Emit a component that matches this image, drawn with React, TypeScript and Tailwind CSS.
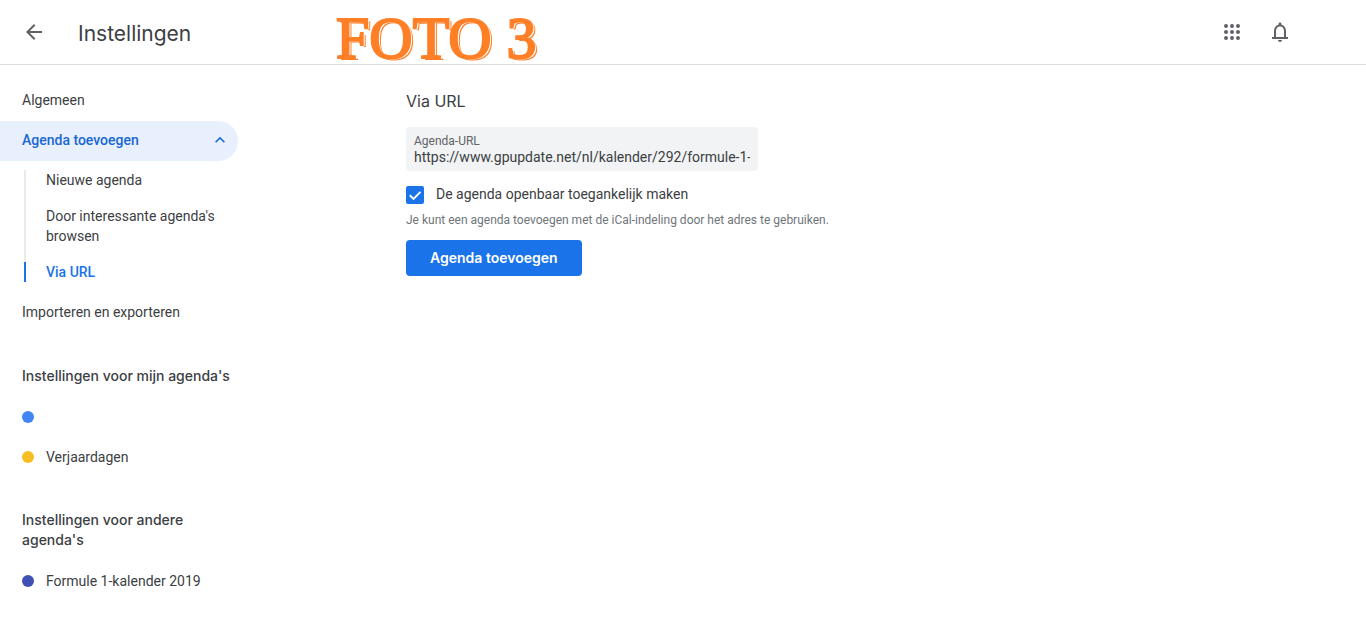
import { useState } from "react";
import { MdArrowBack, MdKeyboardArrowUp } from "react-icons/md";

const subItems = [
  { label: "Nieuwe agenda", active: false },
  { label: "Door interessante agenda's browsen", active: false },
  { label: "Via URL", active: true },
];

const AppsIcon = () => (
  <svg viewBox="0 0 24 24" fill="currentColor" className="size-6">
    {[6, 12, 18].map((y) =>
      [6, 12, 18].map((x) => <circle key={`${x}-${y}`} cx={x} cy={y} r="2" />)
    )}
  </svg>
);

const BellIcon = () => (
  <svg viewBox="0 0 24 24" fill="currentColor" className="size-6">
    <path d="M18 17v-6c0-3.07-1.63-5.64-4.5-6.32V4c0-.83-.67-1.5-1.5-1.5s-1.5.67-1.5 1.5v.68C7.64 5.36 6 7.92 6 11v6H4v2h16v-2h-2zm-2 0H8v-6c0-2.48 1.51-4.5 4-4.5s4 2.02 4 4.5v6zm-4 5c1.1 0 2-.9 2-2h-4c0 1.1.9 2 2 2z" />
  </svg>
);

const Header = () => {
  return (
    <header className="flex h-[65px] items-center border-b border-[#dadce0] pl-[22px] pr-[74px] text-[#5f6368]">
      <button aria-label="Terug" className="cursor-pointer">
        <MdArrowBack className="size-6" />
      </button>
      <h1 className="ml-8 w-[258px] pt-1 font-['Inter',sans-serif] text-[21px] leading-7 text-[#3c4043]">
        Instellingen
      </h1>
      <p className="whitespace-nowrap pt-3 font-['Liberation_Serif',serif] text-[60px] leading-none text-[#ff7f27] [-webkit-text-stroke:2px_#ff7f27] [text-shadow:2px_1px_0_#fff,3px_2px_0_#ff7f27]">
        FOTO 3
      </p>
      <div className="ml-auto flex gap-6">
        <button aria-label="Apps" className="cursor-pointer">
          <AppsIcon />
        </button>
        <button aria-label="Meldingen" className="cursor-pointer">
          <BellIcon />
        </button>
      </div>
    </header>
  );
};

const CalendarLink = ({ color, label }: { color: string; label?: string }) => {
  return (
    <a href="#" aria-label={label ?? "Mijn agenda"} className="flex h-10 items-center gap-3">
      <span className={`size-3 rounded-full ${color}`} />
      {label}
    </a>
  );
};

const Sidebar = () => {
  return (
    <nav className="w-[238px] shrink-0 pt-4">
      <a href="#" className="flex h-10 items-center pb-0.5 pl-[22px]">
        Algemeen
      </a>
      <button className="flex h-10 w-full cursor-pointer items-center justify-between rounded-r-full bg-[#e8f0fe] pb-0.5 pl-[22px] pr-2 font-medium text-[#1967d2]">
        Agenda toevoegen
        <MdKeyboardArrowUp className="size-5" />
      </button>
      <ul className="ml-6 pb-[11px] pt-[9px]">
        {subItems.map(({ label, active }) => (
          <li
            key={label}
            className={
              active
                ? "border-l-2 border-[#1a73e8] pl-5 font-medium text-[#1a73e8]"
                : "border-l-2 border-[#e8eaed] pb-4 pl-5"
            }
          >
            <a href="#" className="block">
              {label}
            </a>
          </li>
        ))}
      </ul>
      <a href="#" className="flex h-10 items-center pb-0.5 pl-[22px]">
        Importeren en exporteren
      </a>

      <section className="pl-[22px] pt-[33px]">
        <h2 className="pb-[11px] font-['Inter',sans-serif] text-sm font-medium">
          Instellingen voor mijn agenda's
        </h2>
        <CalendarLink color="bg-[#4285f4]" />
        <CalendarLink color="bg-[#f6bf26]" label="Verjaardagen" />
      </section>
      <section className="pl-[22px] pt-[33px]">
        <h2 className="pb-[11px] font-['Inter',sans-serif] text-sm font-medium">
          Instellingen voor andere agenda's
        </h2>
        <CalendarLink color="bg-[#3f51b5]" label="Formule 1-kalender 2019" />
      </section>
    </nav>
  );
};

const AddByUrl = () => {
  const [url, setUrl] = useState("https://www.gpupdate.net/nl/kalender/292/formule-1-");
  const [isPublic, setIsPublic] = useState(true);

  return (
    <main className="flex-1 pl-[168px] pr-6 pt-6">
      <form onSubmit={(e) => e.preventDefault()}>
        <h2 className="font-['Inter',sans-serif] text-base leading-6">Via URL</h2>
        <div className="mt-[14px] h-11 max-w-[352px] rounded bg-[#f1f3f4] px-2 pt-1.5">
          <label htmlFor="url" className="block text-xs leading-4 text-[#5f6368]">
            Agenda-URL
          </label>
          <input
            id="url"
            type="text"
            value={url}
            onChange={(e) => setUrl(e.target.value)}
            className="block h-4 w-full bg-transparent text-sm leading-4 outline-none"
          />
        </div>
        <div className="mt-[14px] flex h-5 items-center gap-3">
          <span className="relative size-[18px]">
            <input
              id="public"
              type="checkbox"
              checked={isPublic}
              onChange={(e) => setIsPublic(e.target.checked)}
              className="block size-[18px] cursor-pointer appearance-none rounded-xs border-2 border-[#5f6368] checked:border-[#1a73e8] checked:bg-[#1a73e8]"
            />
            {isPublic && (
              <svg
                viewBox="0 0 18 18"
                fill="none"
                stroke="#fff"
                strokeWidth="2"
                className="pointer-events-none absolute inset-0 size-[18px]"
              >
                <path d="M3.8 9.2l3.7 3.7 7-7" />
              </svg>
            )}
          </span>
          <label htmlFor="public" className="pb-0.5">
            De agenda openbaar toegankelijk maken
          </label>
        </div>
        <p className="mt-[7px] text-xs leading-4 text-[#70757a]">
          Je kunt een agenda toevoegen met de iCal-indeling door het adres te gebruiken.
        </p>
        <button
          type="submit"
          className="mt-3 h-9 cursor-pointer rounded bg-[#1a73e8] px-6 font-['Inter',sans-serif] text-sm font-semibold text-white"
        >
          Agenda toevoegen
        </button>
      </form>
    </main>
  );
};

export default function App() {
  return (
    <div className="min-h-screen bg-white font-['Roboto',sans-serif] text-sm leading-5 text-[#3c4043]">
      <Header />
      <div className="flex">
        <Sidebar />
        <AddByUrl />
      </div>
    </div>
  );
}
